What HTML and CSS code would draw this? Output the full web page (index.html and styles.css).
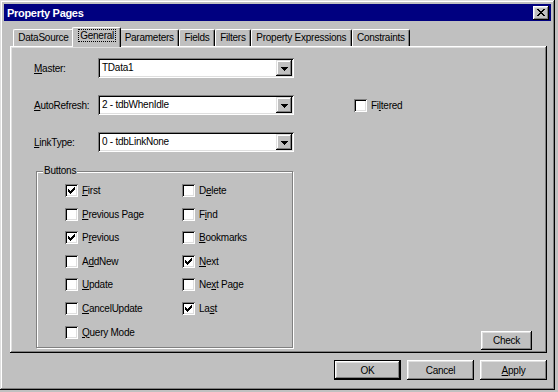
FILE: index.html
```html
<!DOCTYPE html>
<html>
<head>
<meta charset="utf-8">
<title>Property Pages</title>
<link rel="stylesheet" href="styles.css">
</head>
<body>
<div class="window">
  <div class="titlebar">
    <span class="title">Property Pages</span>
    <button class="close" aria-label="Close"><svg width="16" height="14" viewBox="0 0 16 14"><path d="M4 3h2v1H4zM10 3h2v1h-2zM5 4h2v1H5zM9 4h2v1H9zM6 5h4v1H6zM7 6h2v1H7zM6 7h4v1H6zM5 8h2v1H5zM9 8h2v1H9zM4 9h2v1H4zM10 9h2v1h-2z" fill="#000"/></svg></button>
  </div>

  <div class="tabs">
    <div class="tab">DataSource</div>
    <div class="tab active"><span class="focus">General</span></div>
    <div class="tab">Parameters</div>
    <div class="tab">Fields</div>
    <div class="tab">Filters</div>
    <div class="tab">Property Expressions</div>
    <div class="tab">Constraints</div>
  </div>

  <div class="panel">
    <div class="fields">
      <span class="lbl"><u>M</u>aster:</span>
      <div class="combo"><span class="combo-text">TData1</span><span class="combo-btn"><svg width="7" height="4" viewBox="0 0 7 4"><path d="M0 0h7v1H0zM1 1h5v1H1zM2 2h3v1H2zM3 3h1v1H3z" fill="#000"/></svg></span></div>
      <span class="spacer"></span>

      <span class="lbl"><u>A</u>utoRefresh:</span>
      <div class="combo"><span class="combo-text">2 - tdbWhenIdle</span><span class="combo-btn"><svg width="7" height="4" viewBox="0 0 7 4"><path d="M0 0h7v1H0zM1 1h5v1H1zM2 2h3v1H2zM3 3h1v1H3z" fill="#000"/></svg></span></div>
      <div class="chk filtered"><span class="box"></span><span>Fi<u>l</u>tered</span></div>

      <span class="lbl"><u>L</u>inkType:</span>
      <div class="combo"><span class="combo-text">0 - tdbLinkNone</span><span class="combo-btn"><svg width="7" height="4" viewBox="0 0 7 4"><path d="M0 0h7v1H0zM1 1h5v1H1zM2 2h3v1H2zM3 3h1v1H3z" fill="#000"/></svg></span></div>
      <span class="spacer"></span>
    </div>

    <div class="bottom">
      <fieldset class="group">
        <legend>Buttons</legend>
        <div class="chk-grid">
          <div class="chk"><span class="box"><svg width="13" height="13" viewBox="0 0 13 13"><path d="M3 5h1v3H3zM4 6h1v3H4zM5 7h1v3H5zM6 6h1v3H6zM7 5h1v3H7zM8 4h1v3H8zM9 3h1v3H9z" fill="#000"/></svg></span><span><u>F</u>irst</span></div>
          <div class="chk"><span class="box"></span><span>D<u>e</u>lete</span></div>
          <div class="chk"><span class="box"></span><span><u>P</u>revious Page</span></div>
          <div class="chk"><span class="box"></span><span>F<u>i</u>nd</span></div>
          <div class="chk"><span class="box"><svg width="13" height="13" viewBox="0 0 13 13"><path d="M3 5h1v3H3zM4 6h1v3H4zM5 7h1v3H5zM6 6h1v3H6zM7 5h1v3H7zM8 4h1v3H8zM9 3h1v3H9z" fill="#000"/></svg></span><span>P<u>r</u>evious</span></div>
          <div class="chk"><span class="box"></span><span><u>B</u>ookmarks</span></div>
          <div class="chk"><span class="box"></span><span>A<u>d</u>dNew</span></div>
          <div class="chk"><span class="box"><svg width="13" height="13" viewBox="0 0 13 13"><path d="M3 5h1v3H3zM4 6h1v3H4zM5 7h1v3H5zM6 6h1v3H6zM7 5h1v3H7zM8 4h1v3H8zM9 3h1v3H9z" fill="#000"/></svg></span><span><u>N</u>ext</span></div>
          <div class="chk"><span class="box"></span><span><u>U</u>pdate</span></div>
          <div class="chk"><span class="box"></span><span>Ne<u>x</u>t Page</span></div>
          <div class="chk"><span class="box"></span><span><u>C</u>ancelUpdate</span></div>
          <div class="chk"><span class="box"><svg width="13" height="13" viewBox="0 0 13 13"><path d="M3 5h1v3H3zM4 6h1v3H4zM5 7h1v3H5zM6 6h1v3H6zM7 5h1v3H7zM8 4h1v3H8zM9 3h1v3H9z" fill="#000"/></svg></span><span>La<u>s</u>t</span></div>
          <div class="chk"><span class="box"></span><span><u>Q</u>uery Mode</span></div>
        </div>
      </fieldset>
      <button class="btn check">Check</button>
    </div>
  </div>

  <div class="footer">
    <button class="btn default">OK</button>
    <button class="btn">Cancel</button>
    <button class="btn"><u>A</u>pply</button>
  </div>
</div>
</body>
</html>
```

FILE: styles.css
```css
* { box-sizing: border-box; }

html, body {
  margin: 0;
  padding: 0;
}

body {
  width: 558px;
  height: 392px;
  overflow: hidden;
  background: #c0c0c0;
  color: #000;
  font-family: "Liberation Sans", Arial, sans-serif;
  font-size: 10px;
  letter-spacing: -0.25px;
}

u { text-decoration: underline; text-underline-offset: 1px; }

.window {
  width: 555px;
  height: 390px;
  padding: 4px;
  background: #c0c0c0;
  box-shadow: inset -1px -1px #000, inset 1px 1px #dfdfdf, inset -2px -2px #808080, inset 2px 2px #fff;
  display: flex;
  flex-direction: column;
}

.titlebar {
  height: 17px;
  background: #000080;
  color: #fff;
  display: flex;
  align-items: center;
  justify-content: space-between;
  padding: 0 2px 0 3px;
}

.title {
  font-weight: bold;
  font-size: 11px;
  letter-spacing: -0.3px;
}

.close {
  width: 16px;
  height: 14px;
  padding: 0;
  border: 0;
  display: block;
  background: #c0c0c0;
  box-shadow: inset -1px -1px #000, inset 1px 1px #fff, inset -2px -2px #808080, inset 2px 2px #dfdfdf;
}
.close svg { display: block; }

/* Tabs */
.tabs {
  display: flex;
  align-items: flex-end;
  height: 19px;
  margin: 6px 0 0 9px;
}

.tab {
  height: 17px;
  padding: 1px 4.3px 0;
  line-height: 14px;
  white-space: nowrap;
  border: 1px solid #fff;
  border-right-color: #000;
  border-bottom: 0;
  border-radius: 2px 2px 0 0;
  box-shadow: inset -1px 0 #808080;
  background: #c0c0c0;
}

.tab.active {
  height: 20px;
  margin: 0 -2px -1px;
  padding: 1px 5.3px 0 6.3px;
  position: relative;
  z-index: 1;
}

.focus {
  outline: 1px dotted #000;
  outline-offset: 0;
  padding: 0 1px;
}

/* Panel */
.panel {
  margin-left: 6px;
  width: 537px;
  height: 307px;
  padding: 12px 0 0 24px;
  box-shadow: inset -1px -1px #000, inset 1px 1px #fff, inset -2px -2px #808080, inset 2px 2px #dfdfdf;
  display: flex;
  flex-direction: column;
}

.fields {
  display: grid;
  grid-template-columns: 64px 196px auto;
  grid-auto-rows: 20px;
  row-gap: 17px;
  align-items: center;
}

.combo {
  height: 20px;
  display: flex;
  padding: 2px;
  background: #fff;
  box-shadow: inset 1px 1px #808080, inset -1px -1px #fff, inset 2px 2px #000, inset -2px -2px #dfdfdf;
}

.combo-text {
  flex: 1;
  padding-left: 2px;
  line-height: 16px;
  white-space: nowrap;
}

.combo-btn {
  width: 16px;
  height: 16px;
  display: flex;
  align-items: center;
  justify-content: center;
  padding-top: 1px;
  background: #c0c0c0;
  box-shadow: inset -1px -1px #000, inset 1px 1px #dfdfdf, inset -2px -2px #808080, inset 2px 2px #fff;
}
.combo-btn svg { display: block; }

.chk {
  display: flex;
  align-items: center;
  gap: 4px;
  height: 13px;
  line-height: 13px;
  white-space: nowrap;
}

.box {
  width: 13px;
  height: 13px;
  flex: none;
  background: #fff;
  box-shadow: inset 1px 1px #808080, inset -1px -1px #fff, inset 2px 2px #000, inset -2px -2px #dfdfdf;
}
.box svg { display: block; }

.filtered { margin-left: 60px; }

/* Group */
.bottom {
  margin-top: 13px;
  display: flex;
  align-items: flex-end;
}

.group {
  margin: 0 0 2px 2px;
  padding: 0;
  width: 257px;
  border: 1px solid #808080;
  box-shadow: 1px 1px 0 #fff, inset 1px 1px 0 #fff;
  min-width: 0;
}

.group legend {
  margin-left: 6px;
  padding: 0 1px;
  line-height: 12px;
  background: #c0c0c0;
}

.chk-grid {
  display: grid;
  grid-template-columns: 117px auto;
  grid-auto-rows: 13px;
  row-gap: 10.6px;
  margin: 7px 0 8px 28px;
}

/* Buttons */
.btn {
  font: inherit;
  letter-spacing: inherit;
  color: #000;
  border: 0;
  padding: 0;
  background: #c0c0c0;
  box-shadow: inset -1px -1px #000, inset 1px 1px #fff, inset -2px -2px #808080, inset 2px 2px #dfdfdf;
}

.check {
  width: 51px;
  height: 19px;
  margin-left: auto;
  margin-right: 15px;
}

.footer {
  margin-top: 7px;
  margin-right: 4px;
  display: flex;
  justify-content: flex-end;
  gap: 6px;
}

.footer .btn {
  width: 67px;
  height: 20px;
}

.btn.default {
  box-shadow: inset 0 0 0 1px #000, inset -2px -2px #000, inset 2px 2px #fff, inset -3px -3px #808080, inset 3px 3px #dfdfdf;
}
```
